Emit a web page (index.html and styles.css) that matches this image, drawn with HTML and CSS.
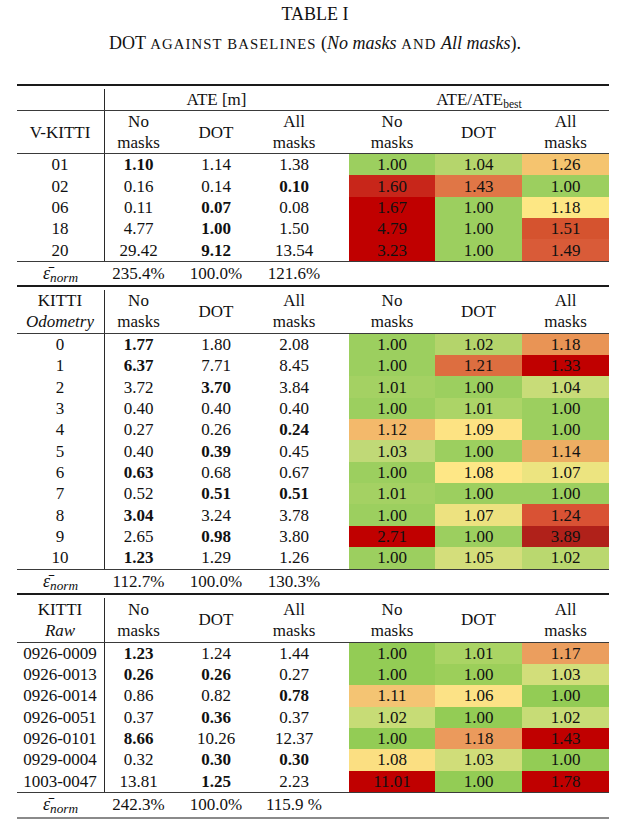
FILE: index.html
```html
<!DOCTYPE html>
<html>
<head>
<meta charset="utf-8">
<link rel="stylesheet" href="styles.css">
</head>
<body>
<div class="page">
  <div class="caption">
    <div class="cap-title">TABLE I</div>
    <div class="cap-sub">DOT <span class="sc">AGAINST BASELINES</span> (<i>No masks</i> <span class="sc">AND</span> <i>All masks</i>).</div>
  </div>

  <div class="tbl">
    <!-- Section 1: V-KITTI -->
    <div class="rule thick"></div>
    <div class="gap"></div>
    <div class="row grp-row">
      <div class="stub"></div>
      <div class="grp ate">ATE [m]</div>
      <div class="sp"></div>
      <div class="grp ratio"><span>ATE/ATE<sub>best</sub></span></div>
    </div>
    <div class="rule thin"></div>
    <div class="row head h1">
      <div class="stub"><span>V-KITTI</span></div>
      <div class="c"><span>No<br>masks</span></div><div class="c">DOT</div><div class="c"><span>All<br>masks</span></div><div class="sp"></div>
      <div class="c"><span>No<br>masks</span></div><div class="c">DOT</div><div class="c"><span>All<br>masks</span></div>
    </div>
    <div class="rule thin"></div>
    <div class="row data"><div class="stub">01</div><div class="c"><b>1.10</b></div><div class="c">1.14</div><div class="c">1.38</div><div class="sp"></div><div class="c" style="background:#9ccf5f">1.00</div><div class="c" style="background:#b5d56c">1.04</div><div class="c" style="background:#f5c46f">1.26</div></div>
    <div class="row data"><div class="stub">02</div><div class="c">0.16</div><div class="c">0.14</div><div class="c"><b>0.10</b></div><div class="sp"></div><div class="c" style="background:#c8261a">1.60</div><div class="c" style="background:#e07646">1.43</div><div class="c" style="background:#9ccf5f">1.00</div></div>
    <div class="row data"><div class="stub">06</div><div class="c">0.11</div><div class="c"><b>0.07</b></div><div class="c">0.08</div><div class="sp"></div><div class="c" style="background:#c00000">1.67</div><div class="c" style="background:#9ccf5f">1.00</div><div class="c" style="background:#fde784">1.18</div></div>
    <div class="row data"><div class="stub">18</div><div class="c">4.77</div><div class="c"><b>1.00</b></div><div class="c">1.50</div><div class="sp"></div><div class="c" style="background:#c00000">4.79</div><div class="c" style="background:#9ccf5f">1.00</div><div class="c" style="background:#d5532f">1.51</div></div>
    <div class="row data"><div class="stub">20</div><div class="c">29.42</div><div class="c"><b>9.12</b></div><div class="c">13.54</div><div class="sp"></div><div class="c" style="background:#c00000">3.23</div><div class="c" style="background:#9ccf5f">1.00</div><div class="c" style="background:#d95b38">1.49</div></div>
    <div class="rule thin"></div>
    <div class="row norm n1"><div class="lab"><span><span class="eps">ε̄</span><sub>norm</sub></span></div><div class="c">235.4%</div><div class="c">100.0%</div><div class="c">121.6%</div></div>

    <!-- Section 2: KITTI Odometry -->
    <div class="rule thick"></div>
    <div class="gap"></div>
    <div class="row head h2">
      <div class="stub"><span>KITTI<br><i>Odometry</i></span></div>
      <div class="c"><span>No<br>masks</span></div><div class="c">DOT</div><div class="c"><span>All<br>masks</span></div><div class="sp"></div>
      <div class="c"><span>No<br>masks</span></div><div class="c">DOT</div><div class="c"><span>All<br>masks</span></div>
    </div>
    <div class="rule thin"></div>
    <div class="row data"><div class="stub">0</div><div class="c"><b>1.77</b></div><div class="c">1.80</div><div class="c">2.08</div><div class="sp"></div><div class="c" style="background:#9ccf5f">1.00</div><div class="c" style="background:#b4d46b">1.02</div><div class="c" style="background:#e99455">1.18</div></div>
    <div class="row data"><div class="stub">1</div><div class="c"><b>6.37</b></div><div class="c">7.71</div><div class="c">8.45</div><div class="sp"></div><div class="c" style="background:#9ccf5f">1.00</div><div class="c" style="background:#dd6e40">1.21</div><div class="c" style="background:#c00000">1.33</div></div>
    <div class="row data"><div class="stub">2</div><div class="c">3.72</div><div class="c"><b>3.70</b></div><div class="c">3.84</div><div class="sp"></div><div class="c" style="background:#a4d163">1.01</div><div class="c" style="background:#9ccf5f">1.00</div><div class="c" style="background:#c8dc78">1.04</div></div>
    <div class="row data"><div class="stub">3</div><div class="c">0.40</div><div class="c">0.40</div><div class="c">0.40</div><div class="sp"></div><div class="c" style="background:#9ccf5f">1.00</div><div class="c" style="background:#acd467">1.01</div><div class="c" style="background:#9ccf5f">1.00</div></div>
    <div class="row data"><div class="stub">4</div><div class="c">0.27</div><div class="c">0.26</div><div class="c"><b>0.24</b></div><div class="sp"></div><div class="c" style="background:#f3b96b">1.12</div><div class="c" style="background:#fde383">1.09</div><div class="c" style="background:#9ccf5f">1.00</div></div>
    <div class="row data"><div class="stub">5</div><div class="c">0.40</div><div class="c"><b>0.39</b></div><div class="c">0.45</div><div class="sp"></div><div class="c" style="background:#c0d977">1.03</div><div class="c" style="background:#9ccf5f">1.00</div><div class="c" style="background:#edae63">1.14</div></div>
    <div class="row data"><div class="stub">6</div><div class="c"><b>0.63</b></div><div class="c">0.68</div><div class="c">0.67</div><div class="sp"></div><div class="c" style="background:#9ccf5f">1.00</div><div class="c" style="background:#fee786">1.08</div><div class="c" style="background:#ece480">1.07</div></div>
    <div class="row data"><div class="stub">7</div><div class="c">0.52</div><div class="c"><b>0.51</b></div><div class="c"><b>0.51</b></div><div class="sp"></div><div class="c" style="background:#a4d163">1.01</div><div class="c" style="background:#9ccf5f">1.00</div><div class="c" style="background:#9ccf5f">1.00</div></div>
    <div class="row data"><div class="stub">8</div><div class="c"><b>3.04</b></div><div class="c">3.24</div><div class="c">3.78</div><div class="sp"></div><div class="c" style="background:#9ccf5f">1.00</div><div class="c" style="background:#ede280">1.07</div><div class="c" style="background:#d95234">1.24</div></div>
    <div class="row data"><div class="stub">9</div><div class="c">2.65</div><div class="c"><b>0.98</b></div><div class="c">3.80</div><div class="sp"></div><div class="c" style="background:#c00000">2.71</div><div class="c" style="background:#9ccf5f">1.00</div><div class="c" style="background:#b0211a">3.89</div></div>
    <div class="row data"><div class="stub">10</div><div class="c"><b>1.23</b></div><div class="c">1.29</div><div class="c">1.26</div><div class="sp"></div><div class="c" style="background:#9ccf5f">1.00</div><div class="c" style="background:#d4de7b">1.05</div><div class="c" style="background:#bad86f">1.02</div></div>
    <div class="rule thin"></div>
    <div class="row norm n2"><div class="lab"><span><span class="eps">ε̄</span><sub>norm</sub></span></div><div class="c">112.7%</div><div class="c">100.0%</div><div class="c">130.3%</div></div>

    <!-- Section 3: KITTI Raw -->
    <div class="rule thick"></div>
    <div class="gap"></div>
    <div class="row head h3">
      <div class="stub"><span>KITTI<br><i>Raw</i></span></div>
      <div class="c"><span>No<br>masks</span></div><div class="c">DOT</div><div class="c"><span>All<br>masks</span></div><div class="sp"></div>
      <div class="c"><span>No<br>masks</span></div><div class="c">DOT</div><div class="c"><span>All<br>masks</span></div>
    </div>
    <div class="rule thin"></div>
    <div class="row data"><div class="stub">0926-0009</div><div class="c"><b>1.23</b></div><div class="c">1.24</div><div class="c">1.44</div><div class="sp"></div><div class="c" style="background:#93cc55">1.00</div><div class="c" style="background:#aad464">1.01</div><div class="c" style="background:#eb9e5e">1.17</div></div>
    <div class="row data"><div class="stub">0926-0013</div><div class="c"><b>0.26</b></div><div class="c"><b>0.26</b></div><div class="c">0.27</div><div class="sp"></div><div class="c" style="background:#93cc55">1.00</div><div class="c" style="background:#9ccf5a">1.00</div><div class="c" style="background:#d2de7a">1.03</div></div>
    <div class="row data"><div class="stub">0926-0014</div><div class="c">0.86</div><div class="c">0.82</div><div class="c"><b>0.78</b></div><div class="sp"></div><div class="c" style="background:#f4c473">1.11</div><div class="c" style="background:#fce286">1.06</div><div class="c" style="background:#93cc55">1.00</div></div>
    <div class="row data"><div class="stub">0926-0051</div><div class="c">0.37</div><div class="c"><b>0.36</b></div><div class="c">0.37</div><div class="sp"></div><div class="c" style="background:#c7dc76">1.02</div><div class="c" style="background:#93cc55">1.00</div><div class="c" style="background:#c7dc76">1.02</div></div>
    <div class="row data"><div class="stub">0926-0101</div><div class="c"><b>8.66</b></div><div class="c">10.26</div><div class="c">12.37</div><div class="sp"></div><div class="c" style="background:#93cc55">1.00</div><div class="c" style="background:#eb9a5c">1.18</div><div class="c" style="background:#c00000">1.43</div></div>
    <div class="row data"><div class="stub">0929-0004</div><div class="c">0.32</div><div class="c"><b>0.30</b></div><div class="c"><b>0.30</b></div><div class="sp"></div><div class="c" style="background:#fbdf82">1.08</div><div class="c" style="background:#d0dd79">1.03</div><div class="c" style="background:#93cc55">1.00</div></div>
    <div class="row data"><div class="stub">1003-0047</div><div class="c">13.81</div><div class="c"><b>1.25</b></div><div class="c">2.23</div><div class="sp"></div><div class="c" style="background:#c00000">11.01</div><div class="c" style="background:#93cc55">1.00</div><div class="c" style="background:#c00000">1.78</div></div>
    <div class="rule thin"></div>
    <div class="row norm n3"><div class="lab"><span><span class="eps">ε̄</span><sub>norm</sub></span></div><div class="c">242.3%</div><div class="c">100.0%</div><div class="c">115.9 %</div></div>
    <div class="rule bottom"></div>
  </div>
</div>
</body>
</html>
```

FILE: styles.css
```css
html, body {
  margin: 0;
  padding: 0;
  background: #ffffff;
}

.page {
  width: 630px;
  font-family: "Liberation Serif", "Times New Roman", serif;
  color: #111111;
}

.caption {
  text-align: center;
  font-size: 18px;
  line-height: 29px;
  height: 59px;
}

.sc {
  font-size: 0.82em;
  letter-spacing: 1.1px;
}

.tbl {
  margin: 25px 0 0 17px;
  width: 592px;
  font-size: 17px;
  line-height: 21px;
}

.rule {
  width: 592px;
}

.rule.thick {
  height: 2px;
  background: #1a1a1a;
}

.rule.thin {
  height: 1px;
  background: #3a3a3a;
}

.rule.bottom {
  height: 2px;
  background: #8a8a8a;
}

.gap {
  height: 3px;
}

.row {
  display: grid;
  grid-template-columns: 88px 67px 88px 68px 21px 86px 87px 87px;
}

.row > div {
  display: flex;
  align-items: center;
  justify-content: center;
  text-align: center;
}

.stub {
  box-sizing: border-box;
  border-right: 1px solid #2a2a2a;
  padding-right: 1px;
}

.grp-row {
  height: 21px;
}

.grp.ate {
  grid-column: 2 / 5;
}

.grp.ratio {
  grid-column: 6 / 9;
}

.grp sub {
  font-size: 0.68em;
  vertical-align: -0.3em;
  line-height: 0;
}

.head.h1 {
  height: 42px;
}

.head.h2 {
  height: 43px;
}

.head.h3 {
  height: 44px;
}

.data {
  height: 21.35px;
}

.data b {
  font-weight: bold;
}

.norm.n1,
.norm.n2 {
  height: 23px;
}

.norm.n3 {
  height: 24px;
}

.norm .lab {
  font-style: italic;
  padding-right: 1px;
}

.norm .eps {
  font-size: 1.05em;
}

.norm .lab sub {
  font-size: 0.78em;
  vertical-align: -0.25em;
  line-height: 0;
}
```
